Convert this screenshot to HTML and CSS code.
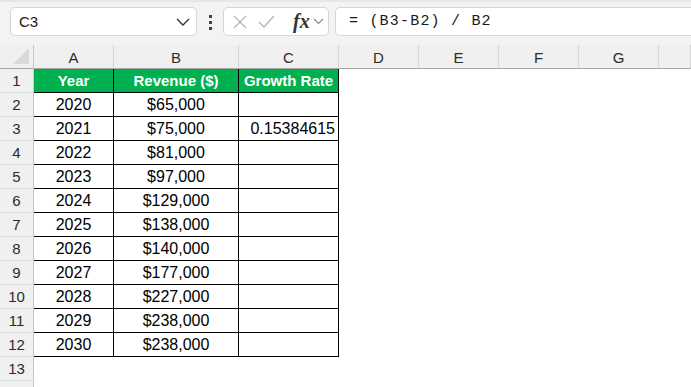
FILE: index.html
```html
<!DOCTYPE html>
<html lang="en">
<head>
  <meta charset="UTF-8">
  <title>Growth Rate</title>
  <link rel="stylesheet" href="styles.css">
</head>
<body>

<div class="toolbar">
  <div class="name-box">
    <span>C3</span>
    <svg class="chev" width="14" height="8" viewBox="0 0 14 8"><path d="M1 1 L7 7 L13 1" fill="none" stroke="#333" stroke-width="1.4"/></svg>
  </div>
  <div class="dots"><i></i><i></i><i></i></div>
  <div class="fx-box">
    <svg width="14" height="14" viewBox="0 0 14 14"><path d="M1 1 L13 13 M13 1 L1 13" stroke="#b5b5b5" stroke-width="1.3"/></svg>
    <svg width="17" height="13" viewBox="0 0 17 13"><path d="M1 7 L6 12 L16 1" fill="none" stroke="#b5b5b5" stroke-width="1.3"/></svg>
    <span class="fx">fx</span>
    <svg width="11" height="7" viewBox="0 0 11 7"><path d="M1 1 L5.5 5.5 L10 1" fill="none" stroke="#8a8a8a" stroke-width="1.2"/></svg>
  </div>
  <div class="formula">= (B3-B2) / B2</div>
</div>

<div class="sheet" id="sheet"></div>

<script>
  const rows = [
    ["Year", "Revenue ($)", "Growth Rate"],
    ["2020", "$65,000", ""],
    ["2021", "$75,000", "0.15384615"],
    ["2022", "$81,000", ""],
    ["2023", "$97,000", ""],
    ["2024", "$129,000", ""],
    ["2025", "$138,000", ""],
    ["2026", "$140,000", ""],
    ["2027", "$177,000", ""],
    ["2028", "$227,000", ""],
    ["2029", "$238,000", ""],
    ["2030", "$238,000", ""]
  ];
  const cols = ["A", "B", "C", "D", "E", "F", "G", ""];
  const sheet = document.getElementById("sheet");

  const cell = (cls, text) => {
    const div = document.createElement("div");
    div.className = cls;
    div.textContent = text || "";
    sheet.appendChild(div);
    return div;
  };

  const corner = cell("corner");
  corner.innerHTML = '<svg width="18" height="18" viewBox="0 0 18 18"><polygon points="17,1 17,17 1,17" fill="#d9d9d9"/></svg>';
  cols.forEach(c => cell("col-head", c));

  // row 14 only peeks in at the bottom edge, so it gets no label
  for (let r = 0; r < 14; r++) {
    cell("row-head", r < 13 ? r + 1 : "");
    for (let c = 0; c < 8; c++) {
      if (r < rows.length && c < 3) {
        let cls = r === 0 ? "cell title" : "cell data";
        if (r > 0 && c === 2) cls += " num";
        cell(cls, rows[r][c]);
      } else {
        cell("cell empty");
      }
    }
  }
</script>

</body>
</html>
```

FILE: styles.css
```css
body {
  margin: 0;
  background: #fff;
  font-family: 'Liberation Sans', Arial, sans-serif;
  overflow: hidden;
}

.toolbar {
  height: 45px;
  box-sizing: border-box;
  background: #f3f3f3;
  border-top: 2px solid #e6e6e6;
  padding: 5px 0 0 10px;
  display: flex;
  align-items: flex-start;
}

.name-box, .fx-box, .formula {
  height: 29px;
  box-sizing: border-box;
  background: #fff;
  border: 1px solid #d6d6d6;
  border-radius: 5px;
  display: flex;
  align-items: center;
}

.name-box {
  width: 187px;
  padding: 0 6px 0 8px;
  justify-content: space-between;
  font-size: 15px;
  color: #1a1a1a;
}

.dots {
  width: 26px;
  display: flex;
  flex-direction: column;
  align-items: center;
  gap: 3px;
  padding-top: 8px;
}

.dots i {
  width: 3px;
  height: 3px;
  background: #444;
}

.fx-box {
  width: 106px;
  padding: 0 4px 0 9px;
  gap: 11px;
}

.fx {
  font-family: 'Liberation Serif', 'DejaVu Serif', serif;
  font-style: italic;
  font-weight: bold;
  font-size: 20px;
  color: #333;
  margin-left: 7px;
  margin-right: -8px;
}

.formula {
  flex: 1;
  margin-left: 6px;
  border-right: none;
  border-radius: 5px 0 0 5px;
  padding-left: 13px;
  font-family: 'Liberation Mono', 'DejaVu Sans Mono', monospace;
  font-size: 15px;
  letter-spacing: 1.2px;
  color: #1a1a1a;
}

.sheet {
  display: grid;
  grid-template-columns: 34px 80px 125px 100px 80px 80px 80px 80px 1fr;
  grid-auto-rows: 24px;
}

.sheet > div {
  box-sizing: border-box;
  display: flex;
  align-items: center;
  justify-content: center;
}

.corner, .col-head, .row-head {
  background: #f0f0f0;
  color: #2b2b2b;
  font-size: 15px;
}

.sheet > .corner {
  border-right: 1px solid #c8c8c8;
  border-bottom: 1px solid #a6a6a6;
  justify-content: flex-end;
  align-items: flex-end;
  padding: 0 3px 3px 0;
}

.col-head {
  border-right: 1px solid #d6d6d6;
  border-bottom: 1px solid #a6a6a6;
  padding-top: 2px;
}

.row-head {
  border-right: 1px solid #c8c8c8;
  border-bottom: 1px solid #dadada;
}

.cell {
  font-size: 16px;
  color: #000;
}

.title, .data {
  border-right: 1px solid #000;
  border-bottom: 1px solid #000;
}

.title {
  background: #00b050;
  color: #fff;
  font-weight: bold;
  font-size: 15px;
}

.sheet > .num {
  justify-content: flex-end;
  padding-right: 3px;
}
```
